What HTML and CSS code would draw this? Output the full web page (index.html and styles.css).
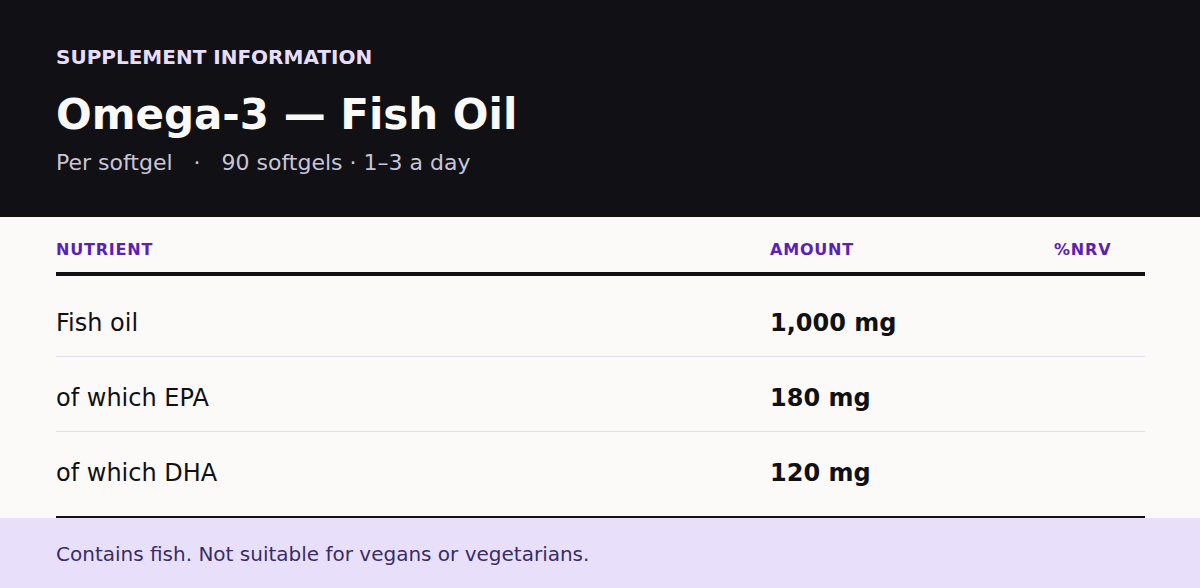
FILE: index.html
```html
<!DOCTYPE html>
<html>
    <head>
        <title>Omega-3 — Fish Oil</title>
        <meta charset="UTF-8">
        <link rel="stylesheet" href="styles.css">
    </head>
    <body>
        <header class="hero">
            <div class="eyebrow">SUPPLEMENT INFORMATION</div>
            <h1>Omega-3 — Fish Oil</h1>
            <div class="serving">
                <span>Per softgel</span>
                <span class="sep">·</span>
                <span>90 softgels · 1–3 a day</span>
            </div>
        </header>

        <!-- Таблица с составом -->
        <main class="facts">
            <div class="facts-head">
                <div>NUTRIENT</div>
                <div>AMOUNT</div>
                <div>%NRV</div>
            </div>
            <div class="facts-body">
                <div class="row">
                    <div class="name">Fish oil</div>
                    <div class="amount">1,000 mg</div>
                    <div class="nrv"></div>
                </div>
                <div class="row">
                    <div class="name">of which EPA</div>
                    <div class="amount">180 mg</div>
                    <div class="nrv"></div>
                </div>
                <div class="row">
                    <div class="name">of which DHA</div>
                    <div class="amount">120 mg</div>
                    <div class="nrv"></div>
                </div>
            </div>
        </main>

        <footer class="note">
            Contains fish. Not suitable for vegans or vegetarians.
        </footer>
    </body>
</html>
```

FILE: styles.css
```css
body {
    margin: 0;
    font-family: "DejaVu Sans", Verdana, sans-serif;
    background: #fbfaf8;
    color: #111014;
}

.hero {
    background: #111014;
    padding: 45px 56px 0;
    height: 217px;
    box-sizing: border-box;
}

.eyebrow {
    color: #e6defb;
    font-size: 20px;
    font-weight: bold;
    line-height: 24px;
}

h1 {
    margin: 20px 0 0;
    color: #faf9f7;
    font-size: 42px;
    line-height: 52px;
}

.serving {
    margin-top: 8px;
    color: #c9c5d9;
    font-size: 22px;
    line-height: 28px;
}

.serving .sep {
    margin: 0 14px;
}

.facts {
    margin: 0 55px 0 56px;
}

.facts-head,
.row {
    display: grid;
    grid-template-columns: 714px 284px 1fr;
}

.facts-head {
    padding: 24px 0 13px;
    line-height: 18px;
    border-bottom: 4px solid #111014;
    color: #5b21b6;
    font-size: 16px;
    font-weight: bold;
    letter-spacing: 0.8px;
}

.facts-body {
    padding: 6px 0 9px;
    border-bottom: 2px solid #111014;
}

.row {
    height: 75px;
    align-items: center;
    font-size: 24px;
    padding-top: 7px;
    box-sizing: border-box;
    border-bottom: 1px solid #e2ddef;
}

.row:last-child {
    border-bottom: none;
}

.amount {
    font-weight: bold;
}

.note {
    background: #e8e0fa;
    color: #3a2c66;
    font-size: 20px;
    height: 70px;
    padding: 2px 56px 0;
    box-sizing: border-box;
    display: flex;
    align-items: center;
}
```
